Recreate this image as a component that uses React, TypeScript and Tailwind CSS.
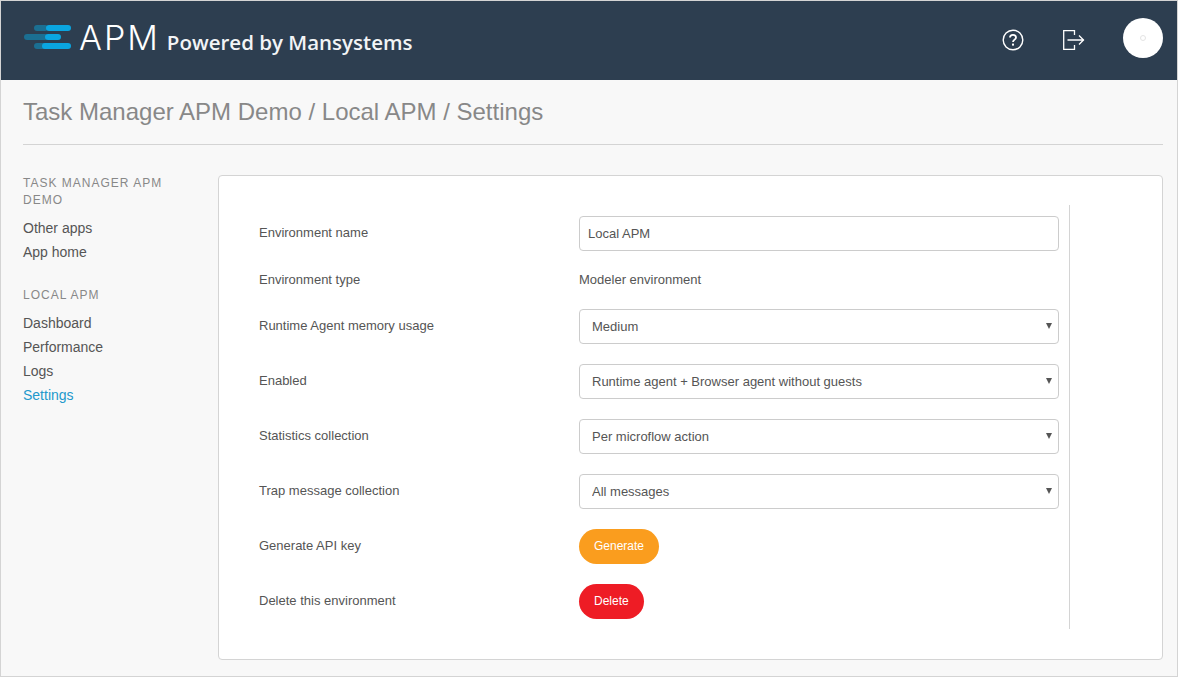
const font = "font-['Liberation_Sans',Arial,sans-serif]";

function Logo() {
  return (
    <svg width="48" height="26" viewBox="0 0 48 26" className="block">
      <rect x="10" y="0" width="14" height="6" rx="3" fill="#1b6f92" />
      <rect x="22" y="0" width="25" height="6" rx="3" fill="#0aa5e0" />
      <rect x="0" y="9" width="24" height="6" rx="3" fill="#1b6f92" />
      <rect x="21" y="9" width="16" height="6" rx="3" fill="#0aa5e0" />
      <rect x="10" y="18" width="14" height="6" rx="3" fill="#1b6f92" />
      <rect x="18" y="18" width="29" height="6" rx="3" fill="#0aa5e0" />
    </svg>
  );
}

function HelpIcon() {
  return (
    <svg width="22" height="22" viewBox="0 0 22 22" fill="none" stroke="#fff" strokeWidth="1.4" className="block">
      <circle cx="11" cy="11" r="9.8" />
      <path d="M8 8.6c0-1.8 1.3-2.8 3-2.8s3 1 3 2.6c0 2.2-3 2.300-3 4.700" strokeWidth="1.8" />
      <rect x="10" y="14.600" width="2" height="2" fill="#fff" stroke="none" />
    </svg>
  );
}

function LogoutIcon() {
  return (
    <svg width="22" height="20" viewBox="0 0 22 20" fill="none" stroke="#fff" strokeWidth="1.300" className="block">
      <path d="M11.500 5V.7H.7v18.600h10.800V15" />
      <path d="M4.500 10H21M16 5.500 20.500 10 16 14.500" />
    </svg>
  );
}

function Field({ label, plain, children }: { label: string; plain?: boolean; children: React.ReactNode }) {
  return (
    <div className="flex items-center">
      <div className={`w-[320px] shrink-0 text-[13px] ${plain ? "leading-[18px]" : "pb-[2px] leading-[16px]"}`}>{label}</div>
      {children}
    </div>
  );
}

function Select({ value }: { value: string }) {
  return (
    <div className="relative w-[480px]">
      <select
        defaultValue={value}
        className="block h-[35px] w-full appearance-none rounded-[4px] border border-[#ccc] bg-white pl-3 text-[13px] text-[#555]"
      >
        <option>{value}</option>
      </select>
      <span className="absolute right-[7px] top-[14px] h-0 w-0 border-x-[3px] border-t-[6px] border-x-transparent border-t-[#555]" />
    </div>
  );
}

const sections = [
  { title: "Task Manager APM Demo", links: ["Other apps", "App home"] },
  { title: "Local APM", links: ["Dashboard", "Performance", "Logs", "Settings"] },
];

export default function App() {
  return (
    <div className={`${font} h-[677px] w-[1178px] overflow-hidden border border-[#d4d4d4] bg-[#f8f8f8] text-[#555]`}>
      <header className="flex h-[79px] items-center justify-between bg-[#2d3e50] pl-[23px] pr-[14px]">
        <div className="mb-[5px] flex items-center">
          <Logo />
          <span className="ml-[7px] font-['Inter'] text-[34px] font-light leading-none tracking-[2px] text-white">APM</span>
          <span className="ml-[7px] mt-[9px] font-['Open_Sans'] text-[20.5px] font-semibold leading-none text-[#f2f4f6]">
            Powered by Mansystems
          </span>
        </div>
        <div className="mb-[5px] flex items-center">
          <div className="mt-[4px]">
            <HelpIcon />
          </div>
          <div className="ml-[39px] mt-[4px]">
            <LogoutIcon />
          </div>
          <div className="ml-[38px] flex h-10 w-10 items-center justify-center rounded-full bg-white">
            <span className="h-[6px] w-[6px] rounded-full border border-[#e4e4e4]" />
          </div>
        </div>
      </header>

      <main className="pl-[22px] pr-[14px]">
        <h1 className="border-b border-[#d4d4d4] pb-[19px] pt-[18px] text-[24px] leading-[27px] text-[#888]">
          Task Manager APM Demo / Local APM / Settings
        </h1>
        <div className="mt-[30px] flex">
          <nav className="w-[195px] shrink-0 pr-[20px]">
            {sections.map((s) => (
              <div key={s.title} className="mb-[23px]">
                <h2 className="mb-[7px] text-[12px] uppercase leading-[17px] tracking-[1px] text-[#888]">
                  {s.title}
                </h2>
                {s.links.map((l) => (
                  <a
                    key={l}
                    href="#"
                    className={`block text-[14px] leading-[24px] ${l === "Settings" ? "text-[#2299cc]" : "text-[#555]"}`}
                  >
                    {l}
                  </a>
                ))}
              </div>
            ))}
          </nav>
          <section className="h-[485px] w-[945px] rounded-[4px] border border-[#d4d4d4] bg-white pb-[30px] pl-[40px] pr-[92px] pt-[29px]">
            <div className="flex h-[424px] flex-col gap-5 border-r border-[#d4d4d4] pr-[10px] pt-[11px]">
              <Field label="Environment name">
                <input
                  readOnly
                  value="Local APM"
                  className="h-[35px] w-[480px] rounded-[4px] border border-[#ccc] px-2 text-[13px] text-[#555]"
                />
              </Field>
              <Field label="Environment type" plain>
                <span className="text-[13px] leading-[18px]">Modeler environment</span>
              </Field>
              <Field label="Runtime Agent memory usage">
                <Select value="Medium" />
              </Field>
              <Field label="Enabled">
                <Select value="Runtime agent + Browser agent without guests" />
              </Field>
              <Field label="Statistics collection">
                <Select value="Per microflow action" />
              </Field>
              <Field label="Trap message collection">
                <Select value="All messages" />
              </Field>
              <Field label="Generate API key">
                <button className="h-[35px] rounded-full bg-[#fa9d1e] px-[15px] pb-[2px] text-[12px] font-normal text-white">
                  Generate
                </button>
              </Field>
              <Field label="Delete this environment">
                <button className="h-[35px] rounded-full bg-[#ee1c25] px-[15px] pb-[2px] text-[12px] font-normal text-white">
                  Delete
                </button>
              </Field>
            </div>
          </section>
        </div>
      </main>
    </div>
  );
}
